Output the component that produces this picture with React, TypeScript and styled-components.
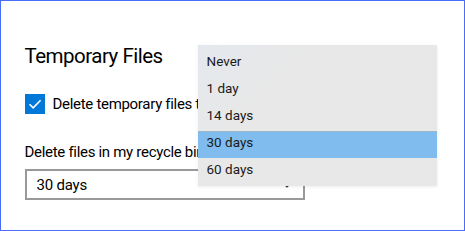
import styled, { createGlobalStyle } from "styled-components"

const GlobalStyle = createGlobalStyle`
    html, body {
        margin: 0;
        padding: 0;
        background: #ffffff;
    }
    body {
        font-family: "Segoe UI", Roboto, "Noto Sans", sans-serif;
        color: #000000;
    }
`

const options = ["Never", "1 day", "14 days", "30 days", "60 days"]
const selected = "30 days"

const App = () => {
    return (
        <>
            <GlobalStyle />
            <Frame>
                <Title>Temporary Files</Title>
                <CheckRow>
                    <CheckBox>
                        <svg width="14" height="14" viewBox="0 0 14 14">
                            <path d="M1.5 7.2 L5.2 10.8 L12.6 3.2" fill="none" stroke="#ffffff" strokeWidth="1.6" />
                        </svg>
                    </CheckBox>
                    <Label>Delete temporary files that my apps aren't using</Label>
                </CheckRow>
                <Caption>Delete files in my recycle bin if they have been there for over:</Caption>
                <Combo>
                    <ComboText>{selected}</ComboText>
                    <Chevron viewBox="0 0 10 6" width="10" height="6">
                        <path d="M1 1 L5 5 L9 1" fill="none" stroke="#333333" strokeWidth="1.2" />
                    </Chevron>
                    <Menu>
                        {options.map((o) => (
                            <MenuItem key={o} $active={o === selected}>{o}</MenuItem>
                        ))}
                    </Menu>
                </Combo>
            </Frame>
        </>
    )
}

const Frame = styled.div`
    width: 465px;
    height: 231px;
    box-sizing: border-box;
    border: 1.5px solid #4a6cf8;
    padding: 41px 0 0 23.5px;
    overflow: hidden;
`

const Title = styled.h2`
    margin: 0;
    font-weight: 400;
    font-size: 20.5px;
    line-height: 28px;
    letter-spacing: -0.5px;
    color: #000000;
`

const CheckRow = styled.div`
    display: flex;
    align-items: center;
    gap: 8px;
    margin-top: 24px;
    white-space: nowrap;
`

const CheckBox = styled.div`
    width: 20px;
    height: 20px;
    flex-shrink: 0;
    background: #0078d7;
    display: flex;
    align-items: center;
    justify-content: center;
`

const Label = styled.span`
    max-width: 145px;
    overflow: hidden;
    font-size: 15px;
    line-height: 20px;
    letter-spacing: -0.3px;
`

const Caption = styled.div`
    max-width: 173px;
    overflow: hidden;
    margin-top: 28px;
    font-size: 15px;
    line-height: 20px;
    letter-spacing: -0.3px;
    white-space: nowrap;
`

const Combo = styled.div`
    position: relative;
    margin-top: 7px;
    width: 280px;
    height: 31px;
    box-sizing: border-box;
    border: 2px solid #999999;
    display: flex;
    align-items: center;
    justify-content: space-between;
    padding: 0 11px 0 10px;
`

const ComboText = styled.span`
    font-size: 15px;
    letter-spacing: -0.2px;
`

const Chevron = styled.svg`
    display: block;
`

const Menu = styled.div`
    position: absolute;
    left: 171px;
    top: -126px;
    width: 239px;
    height: 141px;
    box-sizing: border-box;
    padding: 5px 0 1px;
    background: linear-gradient(135deg, #e4e8ee 0%, #e8e8e8 30%, #e8e8e8 100%);
    box-shadow: 0 1px 3px rgba(0, 0, 0, 0.08);
`

const MenuItem = styled.div<{ $active?: boolean }>`
    height: 27px;
    line-height: 23px;
    padding-left: 9px;
    font-size: 13.5px;
    color: #1a1a1a;
    background: ${(p) => (p.$active ? "#80bdee" : "transparent")};
    box-shadow: ${(p) => (p.$active ? "inset 0 1px 0 #9cb6cc" : "none")};
`

export default App
